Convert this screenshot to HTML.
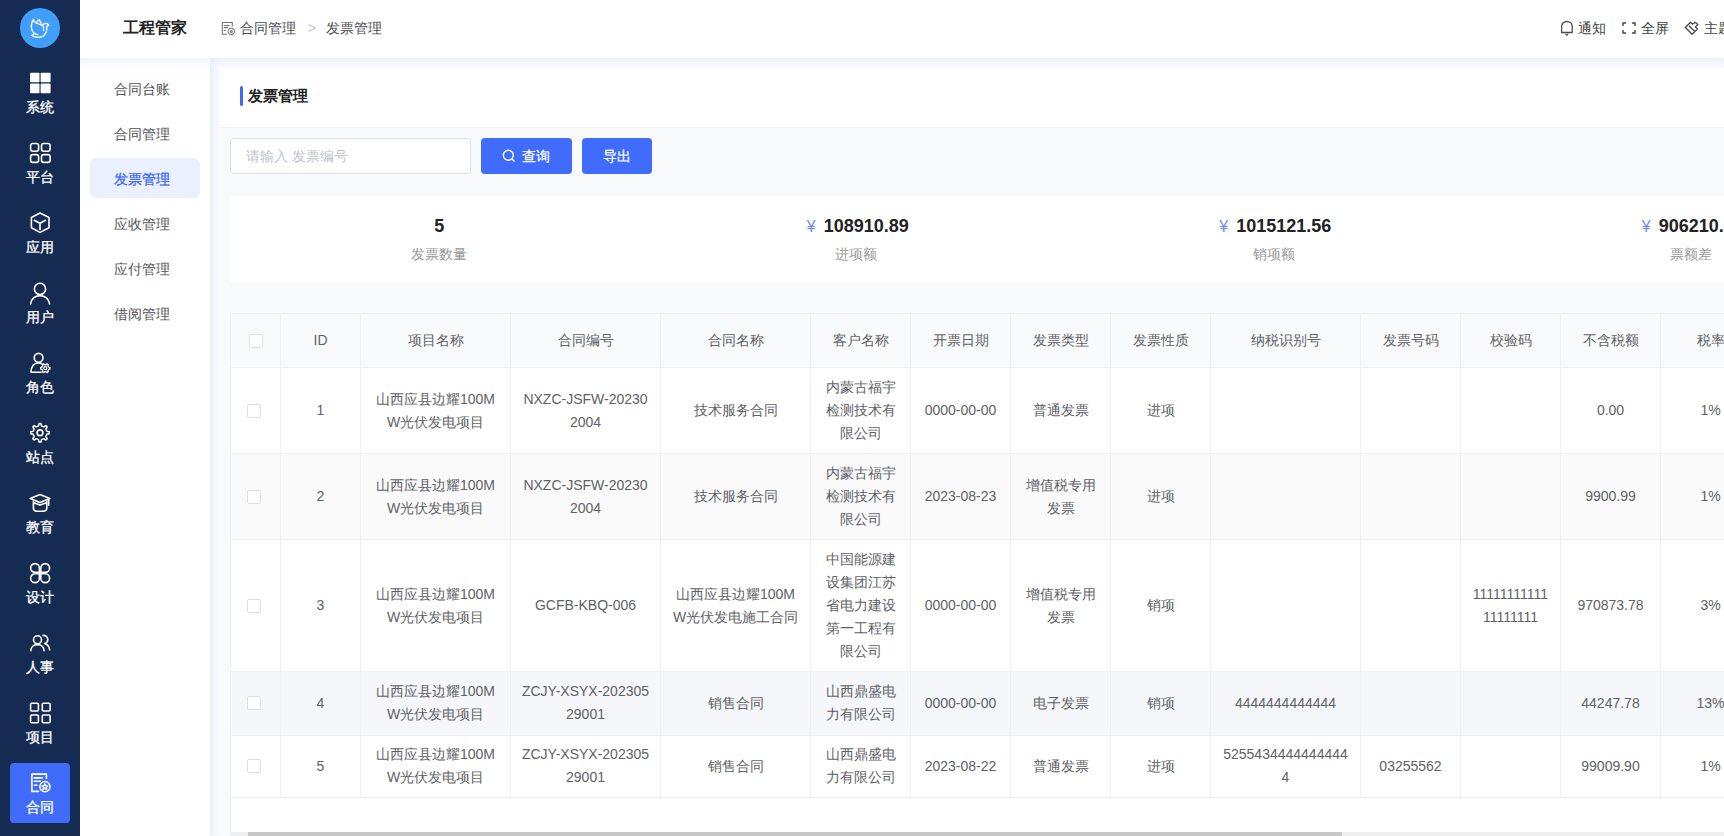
<!DOCTYPE html>
<html><head><meta charset="utf-8">
<style>
*{box-sizing:border-box;margin:0;padding:0}
html,body{width:1724px;height:836px;overflow:hidden}
body{white-space:nowrap;font-family:"Liberation Sans",sans-serif;font-size:14px;color:#606266;background:#f9fafc;position:relative}
.side{position:absolute;left:0;top:0;width:80px;height:836px;background:#152b51}
.logo{position:absolute;left:20px;top:8px;width:40px;height:40px;border-radius:50%;background:#409efc}
.logo svg{position:absolute;left:0;top:0}
.nav{position:absolute;left:10px;width:60px;height:60px;border-radius:5px;color:#fff;text-align:center}
.nav svg{position:absolute;left:20px;top:10px}
.nav span{position:absolute;left:0;right:0;top:36px;font-size:14px;line-height:17px;-webkit-text-stroke:0.3px #fff}
.nav.act{background:#416cfb;border-radius:4px}
.header{position:absolute;left:80px;top:0;right:0;height:58px;background:#fff}
.brand{position:absolute;left:43px;top:17px;font-size:16px;font-weight:bold;color:#222;line-height:22px}
.bc{position:absolute;top:18px;font-size:14px;color:#4b4d50;line-height:20px}
.hr{position:absolute;top:18px;font-size:14px;color:#444;line-height:20px}
.sub{position:absolute;left:80px;top:58px;width:130px;height:778px;background:#fff}
.sub .shadow{position:absolute;left:0;top:0;width:130px;height:12px;background:linear-gradient(rgba(40,110,250,.07),rgba(40,110,250,0))}
.mi{position:absolute;left:10px;width:110px;height:40px;border-radius:6px;font-size:14px;color:#555;line-height:40px;padding-left:24px;padding-top:1px}
.mi.act{background:#ebf0fe;color:#3f6cf2;-webkit-text-stroke:0.3px #3f6cf2}
.content{position:absolute;left:210px;top:58px;right:0;bottom:0;background:#f9fafc;box-shadow:inset 5px 5px 10px -3px rgba(40,110,250,.10)}
.tcard{position:absolute;left:220px;top:68px;width:1700px;height:60px;background:#fff;border-bottom:1px solid #f3f3f3}
.tbar{position:absolute;left:240px;top:86px;width:3px;height:20px;background:#3e6af7;border-radius:2px}
.ttl{position:absolute;left:248px;top:86px;font-size:15px;font-weight:bold;color:#222;line-height:20px}
.inp{position:absolute;left:230px;top:138px;width:241px;height:36px;border:1px solid #dcdfe6;border-radius:4px;background:#fff;color:#c0c4cc;font-size:14px;line-height:34px;padding-left:15px}
.btn{position:absolute;top:138px;height:36px;border-radius:4px;background:#406cfe;color:#fff;font-size:14px;line-height:36px;text-align:center;-webkit-text-stroke:0.25px #fff}
.stats{position:absolute;left:230px;top:196px;width:1670px;height:87px;background:#fff}
.st{position:absolute;top:0;width:417.5px;height:87px;text-align:center}
.st .v{position:absolute;left:3px;right:0;top:19px;font-size:18px;font-weight:bold;color:#222;line-height:22px}
.st .v i{font-style:normal;font-size:16px;font-weight:normal;color:#6d87f6;margin-right:8px}
.st .l{position:absolute;left:0;right:0;top:48px;font-size:14px;color:#999;line-height:20px}
.tbl{position:absolute;left:230px;top:313px;width:1700px;height:523px;background:#fff;border-left:1px solid #f0f0f0}
table{border-collapse:collapse;table-layout:fixed;position:absolute;left:-1px;top:0}
td,th{border:1px solid #f0f0f0;text-align:center;vertical-align:middle;font-weight:normal;color:#606266;padding:0}
th{background:#f9fafc}
.c{padding:0 10px;line-height:23px;word-break:break-all;white-space:normal}
.cb{display:inline-block;width:14px;height:14px;border:1px solid #dcdfe6;border-radius:2px;background:#fff;vertical-align:middle}
tr.s td{background:#fafafa}
tr.h td{background:#f5f7fa}
.sb{position:absolute;left:0;top:519px;width:1700px;height:8px;background:#efefef}
.sb div{position:absolute;left:17px;top:0;width:1094px;height:8px;background:#c8c8c8}
.cb{position:relative;top:-1px;left:-2px}
.cb.hcb{left:0}

</style></head><body>
<div class="side">
<div class="logo"><svg width="40" height="40" viewBox="20 8 40 40" fill="none" stroke="#fff" stroke-width="1.3" stroke-linecap="round" stroke-linejoin="round"><path d="M33.6 19.3 C31.6 21.8 31.2 25 31.4 27.5 C31.6 30 32.6 32.2 34.6 33.5 L31.7 35.5 C33 36.3 36.5 37.4 39.5 37.2 C42.5 37 45 35 46 32.5 C46.8 30.5 46.9 28.5 46.7 26.6 L48.7 25.2 C48 24 46.2 23.3 44.7 23.6 C43.6 23.9 43 24.6 42.6 25.4 C40 24.5 36.5 23.5 34 21.5 Z"/><path d="M36.3 23 C37 21.6 38 20.3 39.3 19.7 C40 21.5 40.6 23 41.8 24"/><path d="M42.6 25.4 C43.6 26.5 44 28 43.6 30.4"/><path d="M34.6 33.5 C35.8 34.2 36.8 34.6 37.8 34.7"/></svg></div>
<div class="nav" style="top:63px"><svg width="20" height="20" viewBox="0 0 20 20" style="overflow:visible"><rect x="0" y="-0.3" width="9.5" height="9.6" rx="0.8" fill="#fff"/><rect x="10.6" y="-0.3" width="10" height="9.6" rx="0.8" fill="#fff"/><rect x="0" y="10.6" width="9.5" height="9.6" rx="0.8" fill="#fff"/><rect x="10.6" y="10.6" width="10" height="9.6" rx="0.8" fill="#fff"/></svg><span>系统</span></div>
<div class="nav" style="top:133px"><svg width="20" height="20" viewBox="0 0 20 20" style="overflow:visible" fill="none" stroke="#fff" stroke-width="1.6" stroke-linecap="round" stroke-linejoin="round"><rect x="0.6" y="0.5" width="8" height="7.8" rx="2.2"/><rect x="11.5" y="0.5" width="8.6" height="7.8" rx="2.2"/><rect x="0.6" y="11.6" width="8" height="7.8" rx="2.2"/><rect x="11.5" y="11.6" width="8.6" height="7.8" rx="2.2"/></svg><span>平台</span></div>
<div class="nav" style="top:203px"><svg width="20" height="20" viewBox="0 0 20 20" style="overflow:visible" fill="none" stroke="#fff" stroke-width="1.6" stroke-linecap="round" stroke-linejoin="round"><path d="M10 0 L19 4.5 L19 14.8 L10 19.4 L1.4 14.8 L1.4 4.5 Z"/><path d="M4.3 7.3 L10 10.2 L15.5 7.3 M10 10.2 L10 16.5"/></svg><span>应用</span></div>
<div class="nav" style="top:273px"><svg width="20" height="20" viewBox="0 0 20 20" style="overflow:visible" fill="none" stroke="#fff" stroke-width="1.6" stroke-linecap="round" stroke-linejoin="round"><circle cx="10" cy="5.9" r="5.6"/><path d="M0.6 21 C1 16 5 12.6 10 12.6 C15 12.6 19 16 19.6 21"/></svg><span>用户</span></div>
<div class="nav" style="top:343px"><svg width="20" height="20" viewBox="0 0 20 20" style="overflow:visible" fill="none" stroke="#fff" stroke-width="1.6" stroke-linecap="round" stroke-linejoin="round"><circle cx="8.6" cy="4.8" r="4.4"/><path d="M11.5 10.6 C10.5 10.2 9.5 10 8.3 10 C3.8 10 1 13.5 1 19.2 L11 19.2"/><path d="M15.99 11.77 L16.89 10.78 L18.33 11.61 L17.93 12.89 L18.62 14.08 L19.93 14.37 L19.93 16.03 L18.62 16.32 L17.93 17.51 L18.33 18.79 L16.89 19.62 L15.99 18.63 L14.61 18.63 L13.71 19.62 L12.27 18.79 L12.67 17.51 L11.98 16.32 L10.67 16.03 L10.67 14.37 L11.98 14.08 L12.67 12.89 L12.27 11.61 L13.71 10.78 L14.61 11.77 Z" stroke-width="1.3"/><circle cx="15.3" cy="15.2" r="1.5" stroke-width="1.2"/></svg><span>角色</span></div>
<div class="nav" style="top:413px"><svg width="20" height="20" viewBox="0 0 20 20" style="overflow:visible" fill="none" stroke="#fff" stroke-width="1.6" stroke-linecap="round" stroke-linejoin="round"><path d="M8.53 2.96 L9.05 0.55 L10.95 0.55 L11.47 2.96 L13.80 3.92 L15.87 2.59 L17.21 3.93 L15.88 6.00 L16.84 8.33 L19.25 8.85 L19.25 10.75 L16.84 11.27 L15.88 13.60 L17.21 15.67 L15.87 17.01 L13.80 15.68 L11.47 16.64 L10.95 19.05 L9.05 19.05 L8.53 16.64 L6.20 15.68 L4.13 17.01 L2.79 15.67 L4.12 13.60 L3.16 11.27 L0.75 10.75 L0.75 8.85 L3.16 8.33 L4.12 6.00 L2.79 3.93 L4.13 2.59 L6.20 3.92 Z" stroke-width="1.5"/><circle cx="10" cy="9.8" r="2.9"/></svg><span>站点</span></div>
<div class="nav" style="top:483px"><svg width="20" height="20" viewBox="0 0 20 20" style="overflow:visible" fill="none" stroke="#fff" stroke-width="1.6" stroke-linecap="round" stroke-linejoin="round"><path d="M0.2 5.6 L10 1.6 L19.8 5.6 L10 9.6 Z"/><path d="M3.4 8.3 L3.4 15 C3.4 17.4 5 18.2 7 18.2 L13 18.2 C15 18.2 16.8 17.4 16.8 15 L16.8 8.3"/><path d="M3.8 9.8 L10 12 L16.5 9.8"/><path d="M18.7 6.8 L18.7 12.3"/></svg><span>教育</span></div>
<div class="nav" style="top:553px"><svg width="20" height="20" viewBox="0 0 20 20" style="overflow:visible" fill="none" stroke="#fff" stroke-width="1.6" stroke-linecap="round" stroke-linejoin="round"><path d="M9.4 9.4 L9.4 5 A4.4 4.4 0 1 0 5 9.4 Z"/><path d="M10.8 9.4 L10.8 5 A4.4 4.4 0 1 1 15.2 9.4 Z"/><path d="M9.4 10.8 L9.4 15.2 A4.4 4.4 0 1 1 5 10.8 Z"/><path d="M10.8 10.8 L10.8 15.2 A4.4 4.4 0 1 0 15.2 10.8 Z"/></svg><span>设计</span></div>
<div class="nav" style="top:623px"><svg width="20" height="20" viewBox="0 0 20 20" style="overflow:visible" fill="none" stroke="#fff" stroke-width="1.6" stroke-linecap="round" stroke-linejoin="round"><circle cx="7.5" cy="6.8" r="4"/><path d="M0.8 17.8 C0.8 14 3.6 11.6 7.5 11.6 C11.4 11.6 14 14 14 17.8"/><path d="M13 2.4 C15.8 2.4 17.8 4.2 17.8 6.6 C17.8 8.6 16.3 10.2 14.6 10.6 C17.6 11.6 19.6 14 19.6 17"/></svg><span>人事</span></div>
<div class="nav" style="top:693px"><svg width="20" height="20" viewBox="0 0 20 20" style="overflow:visible" fill="none" stroke="#fff" stroke-width="1.6" stroke-linecap="round" stroke-linejoin="round"><rect x="0.6" y="0.2" width="7.8" height="7.8" rx="1"/><rect x="12.3" y="0.2" width="7.8" height="7.8" rx="1"/><rect x="0.6" y="12" width="7.8" height="7.8" rx="1"/><rect x="12.3" y="12" width="7.8" height="7.8" rx="1"/></svg><span>项目</span></div>
<div class="nav act" style="top:763px"><svg width="20" height="20" viewBox="0 0 20 20" style="overflow:visible" fill="none" stroke="#fff" stroke-width="1.6" stroke-linecap="round" stroke-linejoin="round"><path d="M8.6 18.4 L1.9 18.4 L1.9 1.1 L16.4 1.1 L16.4 5.4"/><path d="M4.3 4.9 L12.3 4.9 M4.3 8.3 L10.4 8.3 M4.3 12.3 L7 12.3"/><circle cx="14.9" cy="13.7" r="5.1" stroke-width="1.5"/><path d="M14.90 10.80 L15.75 12.73 L17.85 12.94 L16.28 14.35 L16.72 16.41 L14.90 15.35 L13.08 16.41 L13.52 14.35 L11.95 12.94 L14.05 12.73 Z" stroke-width="1.4"/></svg><span>合同</span></div>

</div>
<div class="header">
<div class="brand">工程管家</div>
<svg style="position:absolute;left:136px;top:18px" width="24" height="22" viewBox="0 0 24 22" fill="none" stroke="#6c7077" stroke-width="1.05" stroke-linecap="round" stroke-linejoin="round"><path d="M10.5 16.3 L6.3 16.3 L6.3 4.4 L16.3 4.4 L16.3 7.9"/><path d="M8.2 7.4 L13.2 7.4 M8.2 9.6 L11.5 9.6 M8.2 12.4 L9.6 12.4"/><circle cx="15.3" cy="13.4" r="3.2" stroke-dasharray="1.3 0.8"/><circle cx="15.3" cy="13.4" r="1"/></svg>
<div class="bc" style="left:160px">合同管理</div>
<div class="bc" style="left:228px;color:#c0c4cc">&gt;</div>
<div class="bc" style="left:246px">发票管理</div>
<svg style="position:absolute;left:1476px;top:18px" width="24" height="22" viewBox="0 0 24 22" fill="none" stroke="#4a4a4a" stroke-width="1.3" stroke-linejoin="round"><path d="M5.6 14.5 L5.6 8.6 C5.6 5.4 8 3.5 10.9 3.5 C13.8 3.5 16.2 5.4 16.2 8.6 L16.2 14.5 Z"/><path d="M9.6 16.3 L12.2 16.3 L10.9 17.5 Z" stroke-width="1"/></svg>
<div class="hr" style="left:1498px">通知</div>
<svg style="position:absolute;left:1542px;top:22px" width="14" height="12" viewBox="0 0 14 12" fill="none" stroke="#444" stroke-width="1.4"><path d="M1 4 L1 1 L4 1 M10 1 L13 1 L13 4 M13 8 L13 11 L10 11 M4 11 L1 11 L1 8"/></svg>
<div class="hr" style="left:1561px">全屏</div>
<svg style="position:absolute;left:1600px;top:18px" width="24" height="22" viewBox="0 0 24 22" fill="none" stroke="#4a4a4a" stroke-width="1.3" stroke-linejoin="round"><path d="M5.4 9.5 L10.5 4.3 L12.6 6.3 L15.3 4.3 L17.8 6.6 L15.4 9 L17.5 11 L12.1 16.2 Z"/><path d="M9 7.7 L14.6 13.2"/></svg>
<div class="hr" style="left:1624px">主题</div>
</div>
<div class="sub"><div class="shadow"></div>
<div class="mi" style="top:10px">合同台账</div>
<div class="mi" style="top:55px">合同管理</div>
<div class="mi act" style="top:100px">发票管理</div>
<div class="mi" style="top:145px">应收管理</div>
<div class="mi" style="top:190px">应付管理</div>
<div class="mi" style="top:235px">借阅管理</div>

</div>
<div class="content"></div>
<div class="tcard"></div>
<div class="tbar"></div>
<div class="ttl">发票管理</div>
<div class="inp">请输入 发票编号</div>
<div class="btn" style="left:481px;width:91px"><svg style="position:absolute;left:21px;top:11px" width="14" height="14" viewBox="0 0 14 14" fill="none" stroke="#fff" stroke-width="1.4"><circle cx="6.3" cy="6.3" r="5"/><path d="M10 10 L12.5 12.5"/></svg><span style="position:absolute;left:41px">查询</span></div>
<div class="btn" style="left:582px;width:70px">导出</div>
<div class="stats">
<div class="st" style="left:0"><div class="v" style="left:1px">5</div><div class="l">发票数量</div></div>
<div class="st" style="left:417.5px"><div class="v"><i>¥</i>108910.89</div><div class="l">进项额</div></div>
<div class="st" style="left:835px"><div class="v"><i>¥</i>1015121.56</div><div class="l">销项额</div></div>
<div class="st" style="left:1252.5px"><div class="v"><i>¥</i>906210.67</div><div class="l">票额差</div></div>
</div>
<div class="tbl">
<table style="width:1730px"><colgroup><col style="width:50px"><col style="width:80px"><col style="width:150px"><col style="width:150px"><col style="width:150px"><col style="width:100px"><col style="width:100px"><col style="width:100px"><col style="width:100px"><col style="width:150px"><col style="width:100px"><col style="width:100px"><col style="width:100px"><col style="width:100px"><col style="width:100px"><col style="width:100px"></colgroup><tr style="height:54px"><th><span class="cb hcb"></span></th><th><div class="c">ID</div></th><th><div class="c">项目名称</div></th><th><div class="c">合同编号</div></th><th><div class="c">合同名称</div></th><th><div class="c">客户名称</div></th><th><div class="c">开票日期</div></th><th><div class="c">发票类型</div></th><th><div class="c">发票性质</div></th><th><div class="c">纳税识别号</div></th><th><div class="c">发票号码</div></th><th><div class="c">校验码</div></th><th><div class="c">不含税额</div></th><th><div class="c">税率</div></th><th><div class="c">税额</div></th><th><div class="c">价税合计</div></th></tr><tr class="" style="height:86px"><td><span class="cb"></span></td><td><div class="c">1</div></td><td><div class="c">山西应县边耀100MW光伏发电项目</div></td><td><div class="c">NXZC-JSFW-202302004</div></td><td><div class="c">技术服务合同</div></td><td><div class="c">内蒙古福宇检测技术有限公司</div></td><td><div class="c">0000-00-00</div></td><td><div class="c">普通发票</div></td><td><div class="c">进项</div></td><td><div class="c"></div></td><td><div class="c"></div></td><td><div class="c"></div></td><td><div class="c">0.00</div></td><td><div class="c">1%</div></td><td><div class="c"></div></td><td><div class="c"></div></td></tr><tr class="s" style="height:86px"><td><span class="cb"></span></td><td><div class="c">2</div></td><td><div class="c">山西应县边耀100MW光伏发电项目</div></td><td><div class="c">NXZC-JSFW-202302004</div></td><td><div class="c">技术服务合同</div></td><td><div class="c">内蒙古福宇检测技术有限公司</div></td><td><div class="c">2023-08-23</div></td><td><div class="c">增值税专用发票</div></td><td><div class="c">进项</div></td><td><div class="c"></div></td><td><div class="c"></div></td><td><div class="c"></div></td><td><div class="c">9900.99</div></td><td><div class="c">1%</div></td><td><div class="c"></div></td><td><div class="c"></div></td></tr><tr class="" style="height:132px"><td><span class="cb"></span></td><td><div class="c">3</div></td><td><div class="c">山西应县边耀100MW光伏发电项目</div></td><td><div class="c">GCFB-KBQ-006</div></td><td><div class="c">山西应县边耀100MW光伏发电施工合同</div></td><td><div class="c">中国能源建设集团江苏省电力建设第一工程有限公司</div></td><td><div class="c">0000-00-00</div></td><td><div class="c">增值税专用发票</div></td><td><div class="c">销项</div></td><td><div class="c"></div></td><td><div class="c"></div></td><td><div class="c">1111111111111111111</div></td><td><div class="c">970873.78</div></td><td><div class="c">3%</div></td><td><div class="c"></div></td><td><div class="c"></div></td></tr><tr class="h" style="height:63.5px"><td><span class="cb"></span></td><td><div class="c">4</div></td><td><div class="c">山西应县边耀100MW光伏发电项目</div></td><td><div class="c">ZCJY-XSYX-20230529001</div></td><td><div class="c">销售合同</div></td><td><div class="c">山西鼎盛电力有限公司</div></td><td><div class="c">0000-00-00</div></td><td><div class="c">电子发票</div></td><td><div class="c">销项</div></td><td><div class="c">4444444444444</div></td><td><div class="c"></div></td><td><div class="c"></div></td><td><div class="c">44247.78</div></td><td><div class="c">13%</div></td><td><div class="c"></div></td><td><div class="c"></div></td></tr><tr class="" style="height:62.5px"><td><span class="cb"></span></td><td><div class="c">5</div></td><td><div class="c">山西应县边耀100MW光伏发电项目</div></td><td><div class="c">ZCJY-XSYX-20230529001</div></td><td><div class="c">销售合同</div></td><td><div class="c">山西鼎盛电力有限公司</div></td><td><div class="c">2023-08-22</div></td><td><div class="c">普通发票</div></td><td><div class="c">进项</div></td><td><div class="c">52554344444444444</div></td><td><div class="c">03255562</div></td><td><div class="c"></div></td><td><div class="c">99009.90</div></td><td><div class="c">1%</div></td><td><div class="c"></div></td><td><div class="c"></div></td></tr></table>
<div class="sb"><div></div></div>
</div>
</body></html>
